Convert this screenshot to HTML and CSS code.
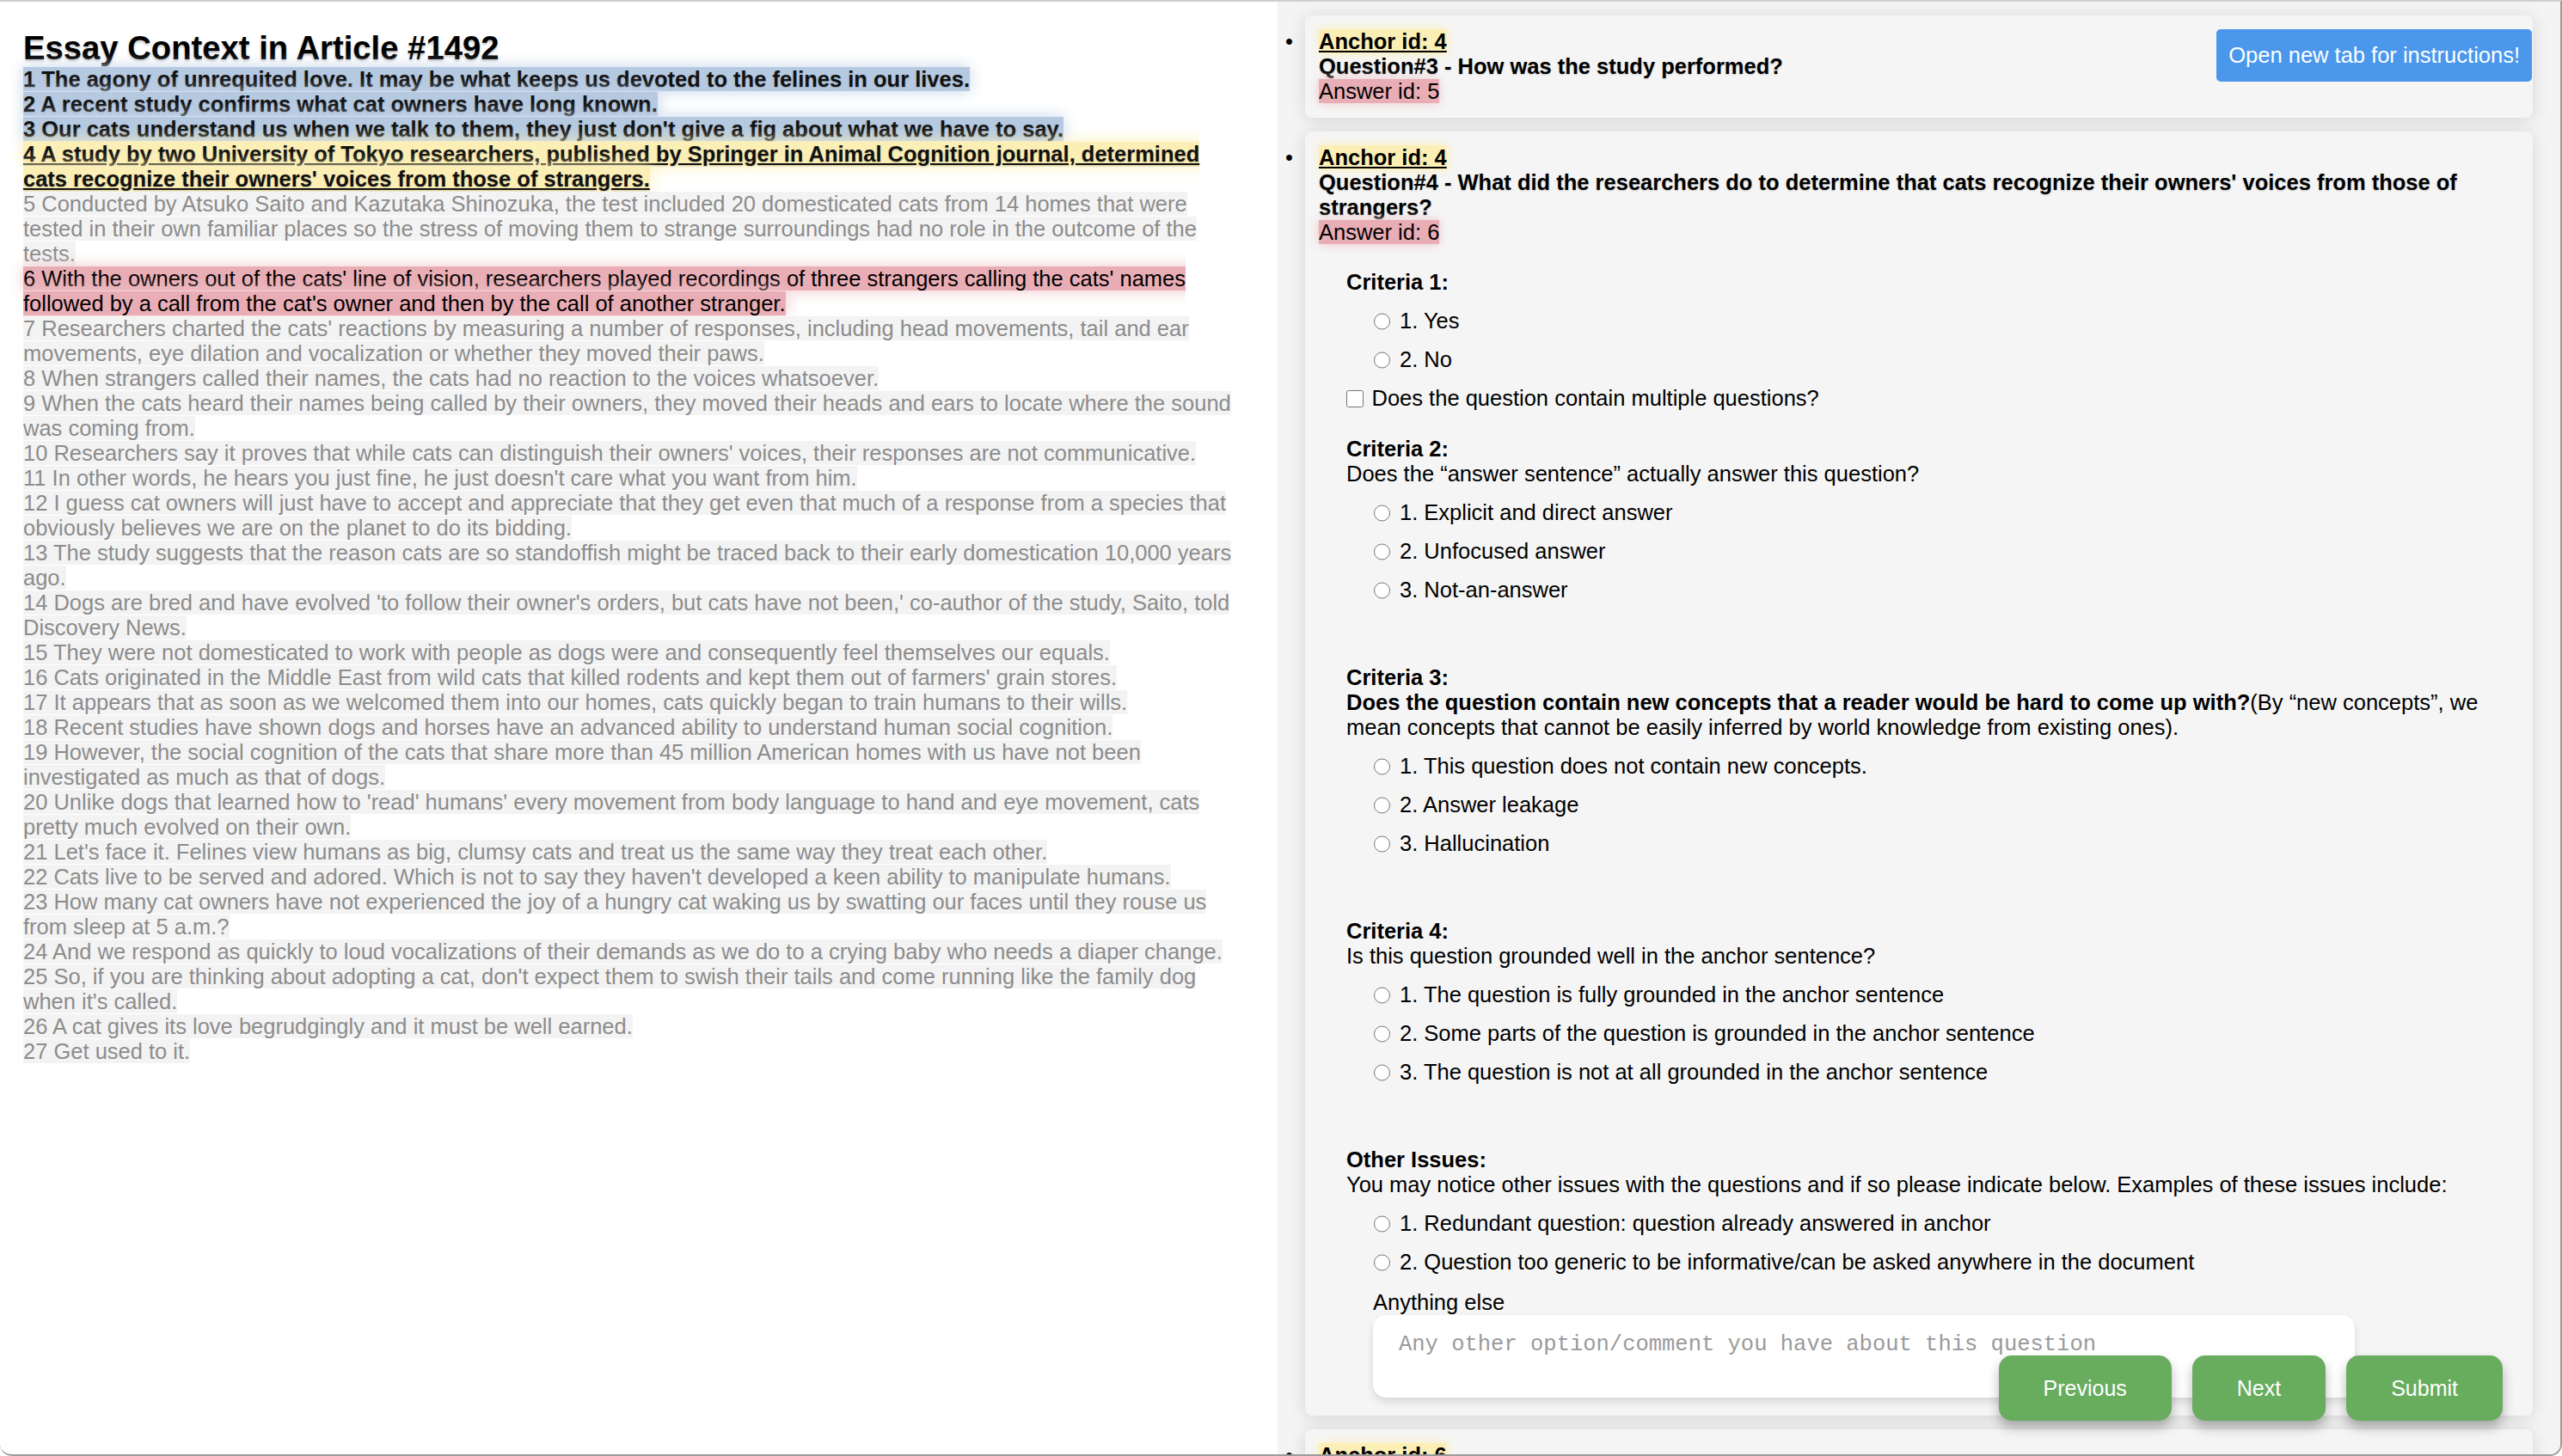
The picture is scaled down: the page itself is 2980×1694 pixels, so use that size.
FILE: index.html
```html
<!DOCTYPE html>
<html lang="en">
<head>
<meta charset="utf-8">
<title>Essay Context in Article #1492</title>
<link rel="stylesheet" href="styles.css">
</head>
<body>
<div class="page">
  <section class="essay">
    <h1>Essay Context in Article #1492</h1>
    <div class="sentences">
      <span class="s s-blue">1 The agony of unrequited love. It may be what keeps us devoted to the felines in our lives.</span><br>
      <span class="s s-blue">2 A recent study confirms what cat owners have long known.</span><br>
      <span class="s s-blue">3 Our cats understand us when we talk to them, they just don't give a fig about what we have to say.</span><br>
      <span class="s s-yellow">4 A study by two University of Tokyo researchers, published by Springer in Animal Cognition journal, determined cats recognize their owners' voices from those of strangers.</span><br>
      <span class="s s-gray">5 Conducted by Atsuko Saito and Kazutaka Shinozuka, the test included 20 domesticated cats from 14 homes that were tested in their own familiar places so the stress of moving them to strange surroundings had no role in the outcome of the tests.</span><br>
      <span class="s s-pink">6 With the owners out of the cats' line of vision, researchers played recordings of three strangers calling the cats' names followed by a call from the cat's owner and then by the call of another stranger.</span><br>
      <span class="s s-gray">7 Researchers charted the cats' reactions by measuring a number of responses, including head movements, tail and ear movements, eye dilation and vocalization or whether they moved their paws.</span><br>
      <span class="s s-gray">8 When strangers called their names, the cats had no reaction to the voices whatsoever.</span><br>
      <span class="s s-gray">9 When the cats heard their names being called by their owners, they moved their heads and ears to locate where the sound was coming from.</span><br>
      <span class="s s-gray">10 Researchers say it proves that while cats can distinguish their owners' voices, their responses are not communicative.</span><br>
      <span class="s s-gray">11 In other words, he hears you just fine, he just doesn't care what you want from him.</span><br>
      <span class="s s-gray">12 I guess cat owners will just have to accept and appreciate that they get even that much of a response from a species that obviously believes we are on the planet to do its bidding.</span><br>
      <span class="s s-gray">13 The study suggests that the reason cats are so standoffish might be traced back to their early domestication 10,000 years ago.</span><br>
      <span class="s s-gray">14 Dogs are bred and have evolved 'to follow their owner's orders, but cats have not been,' co-author of the study, Saito, told Discovery News.</span><br>
      <span class="s s-gray">15 They were not domesticated to work with people as dogs were and consequently feel themselves our equals.</span><br>
      <span class="s s-gray">16 Cats originated in the Middle East from wild cats that killed rodents and kept them out of farmers' grain stores.</span><br>
      <span class="s s-gray">17 It appears that as soon as we welcomed them into our homes, cats quickly began to train humans to their wills.</span><br>
      <span class="s s-gray">18 Recent studies have shown dogs and horses have an advanced ability to understand human social cognition.</span><br>
      <span class="s s-gray">19 However, the social cognition of the cats that share more than 45 million American homes with us have not been investigated as much as that of dogs.</span><br>
      <span class="s s-gray">20 Unlike dogs that learned how to 'read' humans' every movement from body language to hand and eye movement, cats pretty much evolved on their own.</span><br>
      <span class="s s-gray">21 Let's face it. Felines view humans as big, clumsy cats and treat us the same way they treat each other.</span><br>
      <span class="s s-gray">22 Cats live to be served and adored. Which is not to say they haven't developed a keen ability to manipulate humans.</span><br>
      <span class="s s-gray">23 How many cat owners have not experienced the joy of a hungry cat waking us by swatting our faces until they rouse us from sleep at 5 a.m.?</span><br>
      <span class="s s-gray">24 And we respond as quickly to loud vocalizations of their demands as we do to a crying baby who needs a diaper change.</span><br>
      <span class="s s-gray">25 So, if you are thinking about adopting a cat, don't expect them to swish their tails and come running like the family dog when it's called.</span><br>
      <span class="s s-gray">26 A cat gives its love begrudgingly and it must be well earned.</span><br>
      <span class="s s-gray">27 Get used to it.</span>
    </div>
  </section>

  <section class="panel">
    <ul class="cards">
      <li class="item">
        <span class="bullet">•</span>
        <div class="card">
          <span class="anchor">Anchor id: 4</span><br>
          <span class="question">Question#3 - How was the study performed?</span><br>
          <span class="answer">Answer id: 5</span>
          <button class="instr-btn" type="button">Open new tab for instructions!</button>
        </div>
      </li>
      <li class="item">
        <span class="bullet">•</span>
        <div class="card">
          <span class="anchor">Anchor id: 4</span><br>
          <span class="question">Question#4 - What did the researchers do to determine that cats recognize their owners' voices from those of strangers?</span><br>
          <span class="answer">Answer id: 6</span>

          <div class="form">
            <div class="crit">
              <div class="crit-title">Criteria 1:</div>
              <label class="opt"><input type="radio" name="c1">1. Yes</label>
              <label class="opt"><input type="radio" name="c1">2. No</label>
              <label class="check"><input type="checkbox">Does the question contain multiple questions?</label>
            </div>

            <div class="crit gap-s">
              <div class="crit-title">Criteria 2:</div>
              <div class="crit-desc">Does the “answer sentence” actually answer this question?</div>
              <label class="opt"><input type="radio" name="c2">1. Explicit and direct answer</label>
              <label class="opt"><input type="radio" name="c2">2. Unfocused answer</label>
              <label class="opt"><input type="radio" name="c2">3. Not-an-answer</label>
            </div>

            <div class="crit gap-l">
              <div class="crit-title">Criteria 3:</div>
              <div class="crit-desc"><b>Does the question contain new concepts that a reader would be hard to come up with?</b>(By “new concepts”, we mean concepts that cannot be easily inferred by world knowledge from existing ones).</div>
              <label class="opt"><input type="radio" name="c3">1. This question does not contain new concepts.</label>
              <label class="opt"><input type="radio" name="c3">2. Answer leakage</label>
              <label class="opt"><input type="radio" name="c3">3. Hallucination</label>
            </div>

            <div class="crit gap-l">
              <div class="crit-title">Criteria 4:</div>
              <div class="crit-desc">Is this question grounded well in the anchor sentence?</div>
              <label class="opt"><input type="radio" name="c4">1. The question is fully grounded in the anchor sentence</label>
              <label class="opt"><input type="radio" name="c4">2. Some parts of the question is grounded in the anchor sentence</label>
              <label class="opt"><input type="radio" name="c4">3. The question is not at all grounded in the anchor sentence</label>
            </div>

            <div class="crit gap-l">
              <div class="crit-title">Other Issues:</div>
              <div class="crit-desc">You may notice other issues with the questions and if so please indicate below. Examples of these issues include:</div>
              <label class="opt"><input type="radio" name="o1">1. Redundant question: question already answered in anchor</label>
              <label class="opt"><input type="radio" name="o2">2. Question too generic to be informative/can be asked anywhere in the document</label>
              <div class="else-label">Anything else</div>
              <textarea class="comment" placeholder="Any other option/comment you have about this question"></textarea>
            </div>
          </div>
        </div>
      </li>
      <li class="item">
        <span class="bullet">•</span>
        <div class="card">
          <span class="anchor">Anchor id: 6</span>
        </div>
      </li>
    </ul>
  </section>

  <div class="actions">
    <button class="nav-btn" type="button">Previous</button>
    <button class="nav-btn" type="button">Next</button>
    <button class="nav-btn" type="button">Submit</button>
  </div>
</div>
</body>
</html>
```

FILE: styles.css
```css
html, body {
  margin: 0;
  padding: 0;
  background: #ffffff;
}

body {
  font-family: "Liberation Sans", Arial, Helvetica, sans-serif;
  color: #000;
}

.page {
  position: relative;
  width: 2980px;
  height: 1694px;
  box-sizing: border-box;
  border-top: 2px solid #cfcfcf;
  border-right: 2px solid #9c9c9c;
  border-bottom: 2px solid #9c9c9c;
  border-radius: 0 0 14px 14px;
  display: flex;
  overflow: hidden;
  background: #ffffff;
}

/* ---------- essay (left) ---------- */
.essay {
  flex: none;
  width: 1486px;
  box-sizing: border-box;
  padding: 0 41px 0 27px;
}

.essay h1 {
  font-size: 38.25px;
  font-weight: bold;
  line-height: 44px;
  margin: 32px 0 0;
  text-shadow: 0 2px 3px rgba(0, 0, 0, 0.25);
}

.sentences {
  font-size: 25.5px;
  line-height: 29px;
}

.s-blue {
  background: #b5c9e1;
  font-weight: bold;
  color: #111;
  box-shadow: 0 0 18px #c5d5e9;
  text-shadow: 0 1px 2px rgba(0, 0, 0, 0.2);
}

.s-yellow {
  background: #fcefb6;
  font-weight: bold;
  text-decoration: underline;
  color: #111;
  box-shadow: 0 0 18px #fcefb6;
  text-shadow: 0 1px 2px rgba(0, 0, 0, 0.2);
}

.s-pink {
  background: #e9adb5;
  color: #000;
  box-shadow: 0 0 18px #f0c6cb;
}

.s-gray {
  background: #f3f3f3;
  color: #8c8c8c;
}

/* ---------- questions (right) ---------- */
.panel {
  flex: 1;
  min-width: 0;
  background: #f4f4f4;
  box-sizing: border-box;
  padding: 16px 32px 0 0;
  overflow: hidden;
}

.cards {
  list-style: none;
  margin: 0;
  padding: 0;
}

.item {
  display: flex;
  align-items: flex-start;
  margin-bottom: 16px;
}

.bullet {
  flex: none;
  width: 32px;
  box-sizing: border-box;
  padding: 16px 0 0 9px;
  font-size: 25.5px;
  line-height: 29px;
}

.card {
  position: relative;
  flex: 1;
  min-width: 0;
  background: #f5f5f5;
  border-radius: 8px;
  padding: 16px;
  font-size: 25.5px;
  line-height: 29px;
  box-shadow: 0 2px 20px rgba(0, 0, 0, 0.13);
}

.anchor {
  background: #fcefb6;
  font-weight: bold;
  text-decoration: underline;
  box-shadow: 0 0 12px #fcefb6;
}

.question {
  font-weight: bold;
  text-shadow: 0 1px 2px rgba(0, 0, 0, 0.2);
}

.answer {
  background: #e9adb5;
  box-shadow: 0 0 12px #efc3c8;
}

.instr-btn {
  position: absolute;
  top: 16px;
  right: 1px;
  font-family: "Liberation Sans", Arial, sans-serif;
  font-size: 25.5px;
  line-height: 29px;
  color: #fff;
  background: #4a97ec;
  border: none;
  border-radius: 5px;
  padding: 16px 14px;
}

.form {
  margin-top: 29px;
  padding-left: 32px;
}

.crit-title {
  font-weight: bold;
}

.gap-s {
  margin-top: 30px;
}

.gap-l {
  margin-top: 73px;
}

.opt,
.check {
  display: block;
  margin-top: 16px;
}

.opt {
  padding-left: 24px;
}

.opt input {
  width: 19.5px;
  height: 19.5px;
  margin: 0 11px 0 7.5px;
  vertical-align: -1.5px;
}

.check input {
  width: 19.5px;
  height: 19.5px;
  margin: 0 10px 0 0;
  vertical-align: -1.5px;
}

.else-label {
  margin-top: 18px;
  padding-left: 31px;
}

.comment {
  display: block;
  margin: 0 0 5px 31px;
  width: 1142px;
  height: 96px;
  box-sizing: border-box;
  border: none;
  border-radius: 15px;
  padding: 20px 30px;
  background: #ffffff;
  font-family: "Liberation Mono", "Courier New", monospace;
  font-size: 25.5px;
  resize: none;
  box-shadow: 0 5px 10px rgba(0, 0, 0, 0.12);
}

.comment::placeholder {
  color: #9a9a9a;
}

/* ---------- bottom actions ---------- */
.actions {
  position: absolute;
  right: 67px;
  bottom: 39px;
  display: flex;
  gap: 24px;
}

.nav-btn {
  height: 76px;
  padding: 0 52px;
  border: none;
  border-radius: 15px;
  background: #68ad5e;
  color: #fff;
  font-family: "Liberation Sans", Arial, sans-serif;
  font-size: 25px;
  box-shadow: 0 8px 14px rgba(0, 0, 0, 0.28);
}
```
